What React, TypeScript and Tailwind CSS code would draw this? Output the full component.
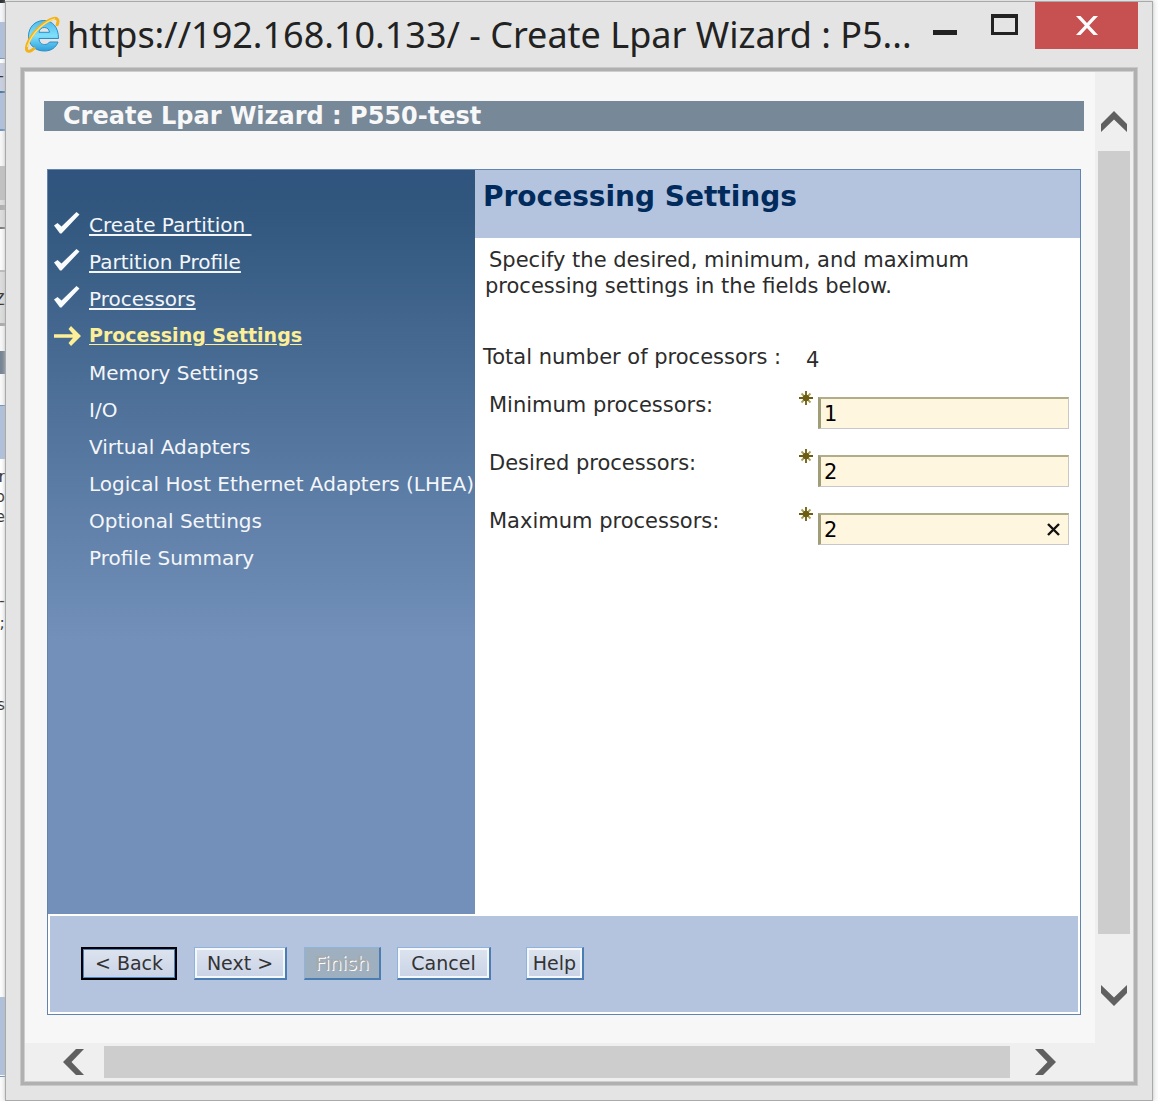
import React, { useState } from "react";

const bands: { h: string; c: string; t?: string }[] = [
  { h: "h-[3px]", c: "bg-[#2f3437]" },
  { h: "h-[19px]", c: "bg-[#f5f7fa]" },
  { h: "h-[36px]", c: "bg-[#b0c1dc]" },
  { h: "h-[1px]", c: "bg-[#6f95bd]" },
  { h: "h-[4px]", c: "bg-white" },
  { h: "h-[28px]", c: "bg-[#c9d0e0]", t: "+" },
  { h: "h-[2px]", c: "bg-[#4f79a8]" },
  { h: "h-[36px]", c: "bg-[#b0c1dc]" },
  { h: "h-[2px]", c: "bg-[#6f95bd]" },
  { h: "h-[35px]", c: "bg-[#f7f7f7]" },
  { h: "h-[34px]", c: "bg-[#c2c2c2]" },
  { h: "h-[5px]", c: "bg-[#dedede]" },
  { h: "h-[5px]", c: "bg-[#b0b0b0]" },
  { h: "h-[17px]", c: "bg-[#dddddd]" },
  { h: "h-[2px]", c: "bg-[#7b7b7b]" },
  { h: "h-[41px]", c: "bg-[#fbfbfb]" },
  { h: "h-[2px]", c: "bg-[#bcbcbc]" },
  { h: "h-[20px]", c: "bg-[#dddddd]" },
  { h: "h-[15px]", c: "bg-[#dddddd]", t: "Z" },
  { h: "h-[16px]", c: "bg-[#dddddd]" },
  { h: "h-[3px]", c: "bg-[#ababab]" },
  { h: "h-[25px]", c: "bg-[#f7f7f7]" },
  { h: "h-[23px]", c: "bg-[#768494]" },
  { h: "h-[31px]", c: "bg-[#f9f9f9]" },
  { h: "h-[1px]", c: "bg-[#6f95bd]" },
  { h: "h-[53px]", c: "bg-[#b0c1dc]" },
  { h: "h-[8px]", c: "bg-white" },
  { h: "h-[20px]", c: "bg-white", t: "r" },
  { h: "h-[20px]", c: "bg-white", t: "o" },
  { h: "h-[20px]", c: "bg-white", t: "e" },
  { h: "h-[64px]", c: "bg-[#fcfcfc]" },
  { h: "h-[20px]", c: "bg-[#fcfcfc]", t: "-" },
  { h: "h-[24px]", c: "bg-[#fcfcfc]", t: ";" },
  { h: "h-[60px]", c: "bg-[#fcfcfc]" },
  { h: "h-[20px]", c: "bg-[#fcfcfc]", t: "s" },
  { h: "h-[282px]", c: "bg-[#fcfcfc]" },
  { h: "h-[78px]", c: "bg-[#b0c1dc]" },
  { h: "h-[1px]", c: "bg-white" },
  { h: "h-[1px]", c: "bg-[#6f95bd]" },
];

const steps = [
  { label: "Create Partition\u00a0", state: "done" },
  { label: "Partition Profile", state: "done" },
  { label: "Processors", state: "done" },
  { label: "Processing Settings", state: "current" },
  { label: "Memory Settings", state: "todo" },
  { label: "I/O", state: "todo" },
  { label: "Virtual Adapters", state: "todo" },
  { label: "Logical Host Ethernet Adapters (LHEA)", state: "todo" },
  { label: "Optional Settings", state: "todo" },
  { label: "Profile Summary", state: "todo" },
];

function BrowserLogo() {
  return (
    <svg width="36" height="38" viewBox="0 0 36 38" className="block" aria-hidden="true">
      <defs>
        <linearGradient id="ie" x1="0" y1="0" x2="0" y2="1">
          <stop offset="0" stopColor="#4fb9ea" />
          <stop offset="0.5" stopColor="#7fe0fb" />
          <stop offset="1" stopColor="#2d9fdc" />
        </linearGradient>
      </defs>
      <path
        d="M33.5 22.500H14c.3 4 2.400 6 5.600 6 2.300 0 4-.9 4.900-2.500h8.500c-2 5.700-7 9-13.600 9C10 35 3.500 28.800 3.500 20.200 3.500 11.200 10 4.500 18.800 4.500c8.800 0 14.700 6.700 14.700 18zM24.500 16.300c-.4-3.200-2.300-4.800-5.200-4.800s-4.800 1.700-5.300 4.800z"
        fill="url(#ie)"
        stroke="#2a8fc8"
        strokeWidth="1"
      />
      <path
        d="M9 32.500C6 35.500 2.600 36.300 1.700 34 .3 29.800 5.500 19.500 14 11.500 21.500 4.500 29.500 .8 32 2.800c1.300 1 1.200 3.300.2 6"
        fill="none"
        stroke="#f2b21c"
        strokeWidth="3"
        strokeLinecap="round"
      />
      <path d="M2.300 31C4.200 24.500 9 17 15 11.500 20 7 25 3.800 30 2.800" fill="none" stroke="#fde27a" strokeWidth="1.200" />
    </svg>
  );
}

function Check() {
  return (
    <svg width="26" height="22" viewBox="0 0 26 22" className="mb-[3px] block" aria-hidden="true">
      <path d="M0 13.500 3.500 11 7.500 14.500 22.500 0 25.500 2.500 7.500 21.500 6 21.500z" fill="#fafbfc" />
    </svg>
  );
}

function Arrow() {
  return (
    <svg width="28" height="20" viewBox="0 0 28 20" className="block" aria-hidden="true">
      <path d="M0 8.200H19L14.500 3 17 0 27 10 17 20 14.500 17 19 11.800H0z" fill="#fdee98" />
    </svg>
  );
}

function Required() {
  return (
    <svg width="14" height="14" viewBox="0 0 14 14" className="-mt-[6px] shrink-0" aria-hidden="true">
      <path d="M2.500 2.500l9 9M11.500 2.500l-9 9" stroke="#a89f58" strokeWidth="1.800" />
      <path d="M7 0v14M0 7h14" stroke="#6d5d12" strokeWidth="1.800" />
      <circle cx="7" cy="7" r="3.300" fill="#6d5d12" />
    </svg>
  );
}

function Field({ id, label, initial, clear }: { id: string; label: string; initial: string; clear?: boolean }) {
  const [value, setValue] = useState(initial);
  return (
    <div className="flex h-8 items-start">
      <label htmlFor={id} className="-mt-1 w-[310px] leading-6">
        {label}
      </label>
      <Required />
      <div className="relative ml-[5px] flex-1">
        <input
          id={id}
          value={value}
          onChange={(e) => setValue(e.target.value)}
          className="h-8 w-full border-t-2 border-r border-b border-l-[3px] border-t-[#b0ae88] border-r-[#c8c8c4] border-b-[#c8c8cc] border-l-[#a09e78] bg-[#fff6df] pl-[3px] text-black outline-none"
        />
        {clear && (
          <button
            type="button"
            aria-label="Clear"
            onClick={() => setValue("")}
            className="absolute top-[10px] right-[9px]"
          >
            <svg width="13" height="13" viewBox="0 0 13 13" className="block">
              <path d="M1 1l11 11M12 1L1 12" stroke="#111" strokeWidth="2.400" />
            </svg>
          </button>
        )}
      </div>
    </div>
  );
}

const normalButton =
  "h-[33px] border border-t-[#8fb4dc] border-l-[#8fb4dc] border-r-2 border-b-2 border-r-[#4b7cb2] border-b-[#4b7cb2] bg-linear-to-b from-[#dde4ef] to-[#c9d3e6] text-[#333] shadow-[inset_0_0_0_2px_#f4f8fd]";

export default function App() {
  return (
    <div className="flex min-h-screen bg-[#fbfbfb] font-['DejaVu_Sans',Verdana,sans-serif] text-[21px] text-[#2c2c2c]">
      <div className="w-[5px] shrink-0 overflow-hidden text-[16px]" aria-hidden="true">
        {bands.map((b, i) => (
          <div key={i} className={`${b.h} ${b.c} flex items-center justify-end overflow-hidden text-[#333]`}>
            {b.t}
          </div>
        ))}
      </div>

      <div className="mt-[1px] mr-[5px] flex min-w-0 flex-1 flex-col border border-[#a8aaa9] bg-[#e4e4e4] px-[14px] pb-[14px] shadow-[0_0_4px_#bbb]">
        <header className="flex h-[65px] items-start">
          <div className="mt-[14px] ml-[5px] shrink-0">
            <BrowserLogo />
          </div>
          <h1 className="mt-[10px] ml-[6px] min-w-0 flex-1 whitespace-nowrap font-['Noto_Sans','Open_Sans',sans-serif] text-[36px] leading-[46px] text-[#222]">
            https://192.168.10.133/ - Create Lpar Wizard : P5...
          </h1>
          <button type="button" aria-label="Minimize" className="mt-[28px] mr-[34px]">
            <span className="block h-[5px] w-[24px] bg-[#222]" />
          </button>
          <button type="button" aria-label="Maximize" className="mt-[12px] mr-[17px]">
            <span className="block h-[21px] w-[27px] border-[3px] border-t-4 border-[#222]" />
          </button>
          <button type="button" aria-label="Close" className="flex h-[47px] w-[103px] items-center justify-center bg-[#c75050]">
            <svg width="22" height="19" viewBox="0 0 22 19">
              <path d="M0 0h4.500l6.500 7 6.500-7h4.500l-8.800 9.500 8.800 9.500h-4.500l-6.500-7-6.500 7H0l8.800-9.500z" fill="white" />
            </svg>
          </button>
        </header>

        <div className="flex flex-1 flex-col border border-[#c8c8c8] bg-[#b0b0b0] p-[3px]">
          <div className="flex flex-1 flex-col border border-[#cecece] bg-[#efefef]">
            <div className="flex flex-1">
              <main className="min-w-0 flex-1 bg-[#f7f7f7] pt-[29px] pr-[11px] pb-[27px] pl-[19px]">
                <h2 className="h-[30px] bg-[#778899] pl-[19px] text-[24px] leading-[30px] font-bold text-[#f8f8f8]">
                  Create Lpar Wizard : P550-test
                </h2>

                <section className="mt-[38px] mr-[3px] ml-[3px] border border-[#6285b0] bg-white">
                  <div className="flex min-h-[744px]">
                    <nav className="w-[427px] shrink-0 bg-[#7290b9] bg-[linear-gradient(#30547d_0px,#31577f_40px,#7290b9_470px)] pt-[36px]">
                      <ul>
                        {steps.map((s) => (
                          <li key={s.label} className="flex h-[37px] items-center text-[20px] whitespace-nowrap text-[#f4f6f9]">
                            <span className="w-[41px] shrink-0 pl-[6px]">
                              {s.state === "done" && <Check />}
                              {s.state === "current" && <Arrow />}
                            </span>
                            {s.state === "todo" ? (
                              <span>{s.label}</span>
                            ) : (
                              <a
                                href="#"
                                className={
                                  s.state === "current"
                                    ? "text-[19px] font-bold text-[#fdee98] underline underline-offset-2"
                                    : "underline underline-offset-2"
                                }
                              >
                                {s.label}
                              </a>
                            )}
                          </li>
                        ))}
                      </ul>
                    </nav>
                    <div className="min-w-0 flex-1">
                      <h3 className="h-[68px] bg-[#b5c4de] pt-[9px] pl-[8px] text-[28px] leading-9 font-bold text-[#002b5c]">
                        Processing Settings
                      </h3>
                      <p className="mt-[9px] pl-[10px] leading-[26px]">
                        <span className="pl-[4px]">Specify the desired, minimum, and maximum</span>
                        <br />
                        processing settings in the fields below.
                      </p>
                      <p className="mt-[46px] flex pl-[8px] leading-6">
                        <span className="w-[323px]">Total number of processors :</span>
                        <span className="mt-[3px]">4</span>
                      </p>
                      <form className="mt-[25px] flex flex-col gap-[26px] pr-[11px] pl-[14px]">
                        <Field id="min" label="Minimum processors:" initial="1" />
                        <Field id="des" label="Desired processors:" initial="2" />
                        <Field id="max" label="Maximum processors:" initial="2" clear />
                      </form>
                    </div>
                  </div>
                  <div className="flex h-[100px] border-2 border-white bg-[#b5c4de] pt-[31px] pl-[31px] text-[19px]">
                    <button
                      type="button"
                      className="h-[33px] w-[96px] border-2 border-black bg-linear-to-b from-[#dde4ef] to-[#c9d3e6] text-[#333] shadow-[inset_0_0_0_1px_#4b86c0]"
                    >
                      &lt; Back
                    </button>
                    <button type="button" className={`${normalButton} ml-[17px] w-[93px]`}>
                      Next &gt;
                    </button>
                    <button
                      type="button"
                      disabled
                      className="ml-[17px] h-[33px] w-[77px] border border-t-[#8fb4dc] border-l-[#8fb4dc] border-r-2 border-b-2 border-r-[#4b7cb2] border-b-[#4b7cb2] bg-[#9eafc0] text-[#a8a8a8] [text-shadow:1px_1px_0_white]"
                    >
                      Finish
                    </button>
                    <button type="button" className={`${normalButton} ml-[16px] w-[94px]`}>
                      Cancel
                    </button>
                    <button type="button" className={`${normalButton} ml-[35px] w-[58px]`}>
                      Help
                    </button>
                  </div>
                </section>
              </main>

              <div className="flex w-[38px] flex-col items-center pt-[39px] pb-[37px]">
                <button type="button" aria-label="Scroll up">
                  <svg width="26" height="21" viewBox="0 0 26 21" className="block">
                    <path d="M13 0 26 13V21L13 8.500 0 21V13z" fill="#606060" />
                  </svg>
                </button>
                <div className="mt-[19px] mb-[51px] w-8 flex-1 bg-[#cdcdcd]" />
                <button type="button" aria-label="Scroll down">
                  <svg width="26" height="21" viewBox="0 0 26 21" className="block">
                    <path d="M13 21 26 8V0L13 12.500 0 0V8z" fill="#606060" />
                  </svg>
                </button>
              </div>
            </div>
            <div className="flex h-[38px] items-center pr-[77px] pl-[38px]">
              <button type="button" aria-label="Scroll left">
                <svg width="21" height="26" viewBox="0 0 21 26" className="block">
                  <path d="M0 13 13 0H21L8.500 13 21 26H13z" fill="#606060" />
                </svg>
              </button>
              <div className="mr-[25px] ml-[20px] h-8 flex-1 bg-[#cdcdcd]" />
              <button type="button" aria-label="Scroll right">
                <svg width="21" height="26" viewBox="0 0 21 26" className="block">
                  <path d="M21 13 8 0H0L12.500 13 0 26H8z" fill="#606060" />
                </svg>
              </button>
            </div>
          </div>
        </div>
      </div>
    </div>
  );
}
